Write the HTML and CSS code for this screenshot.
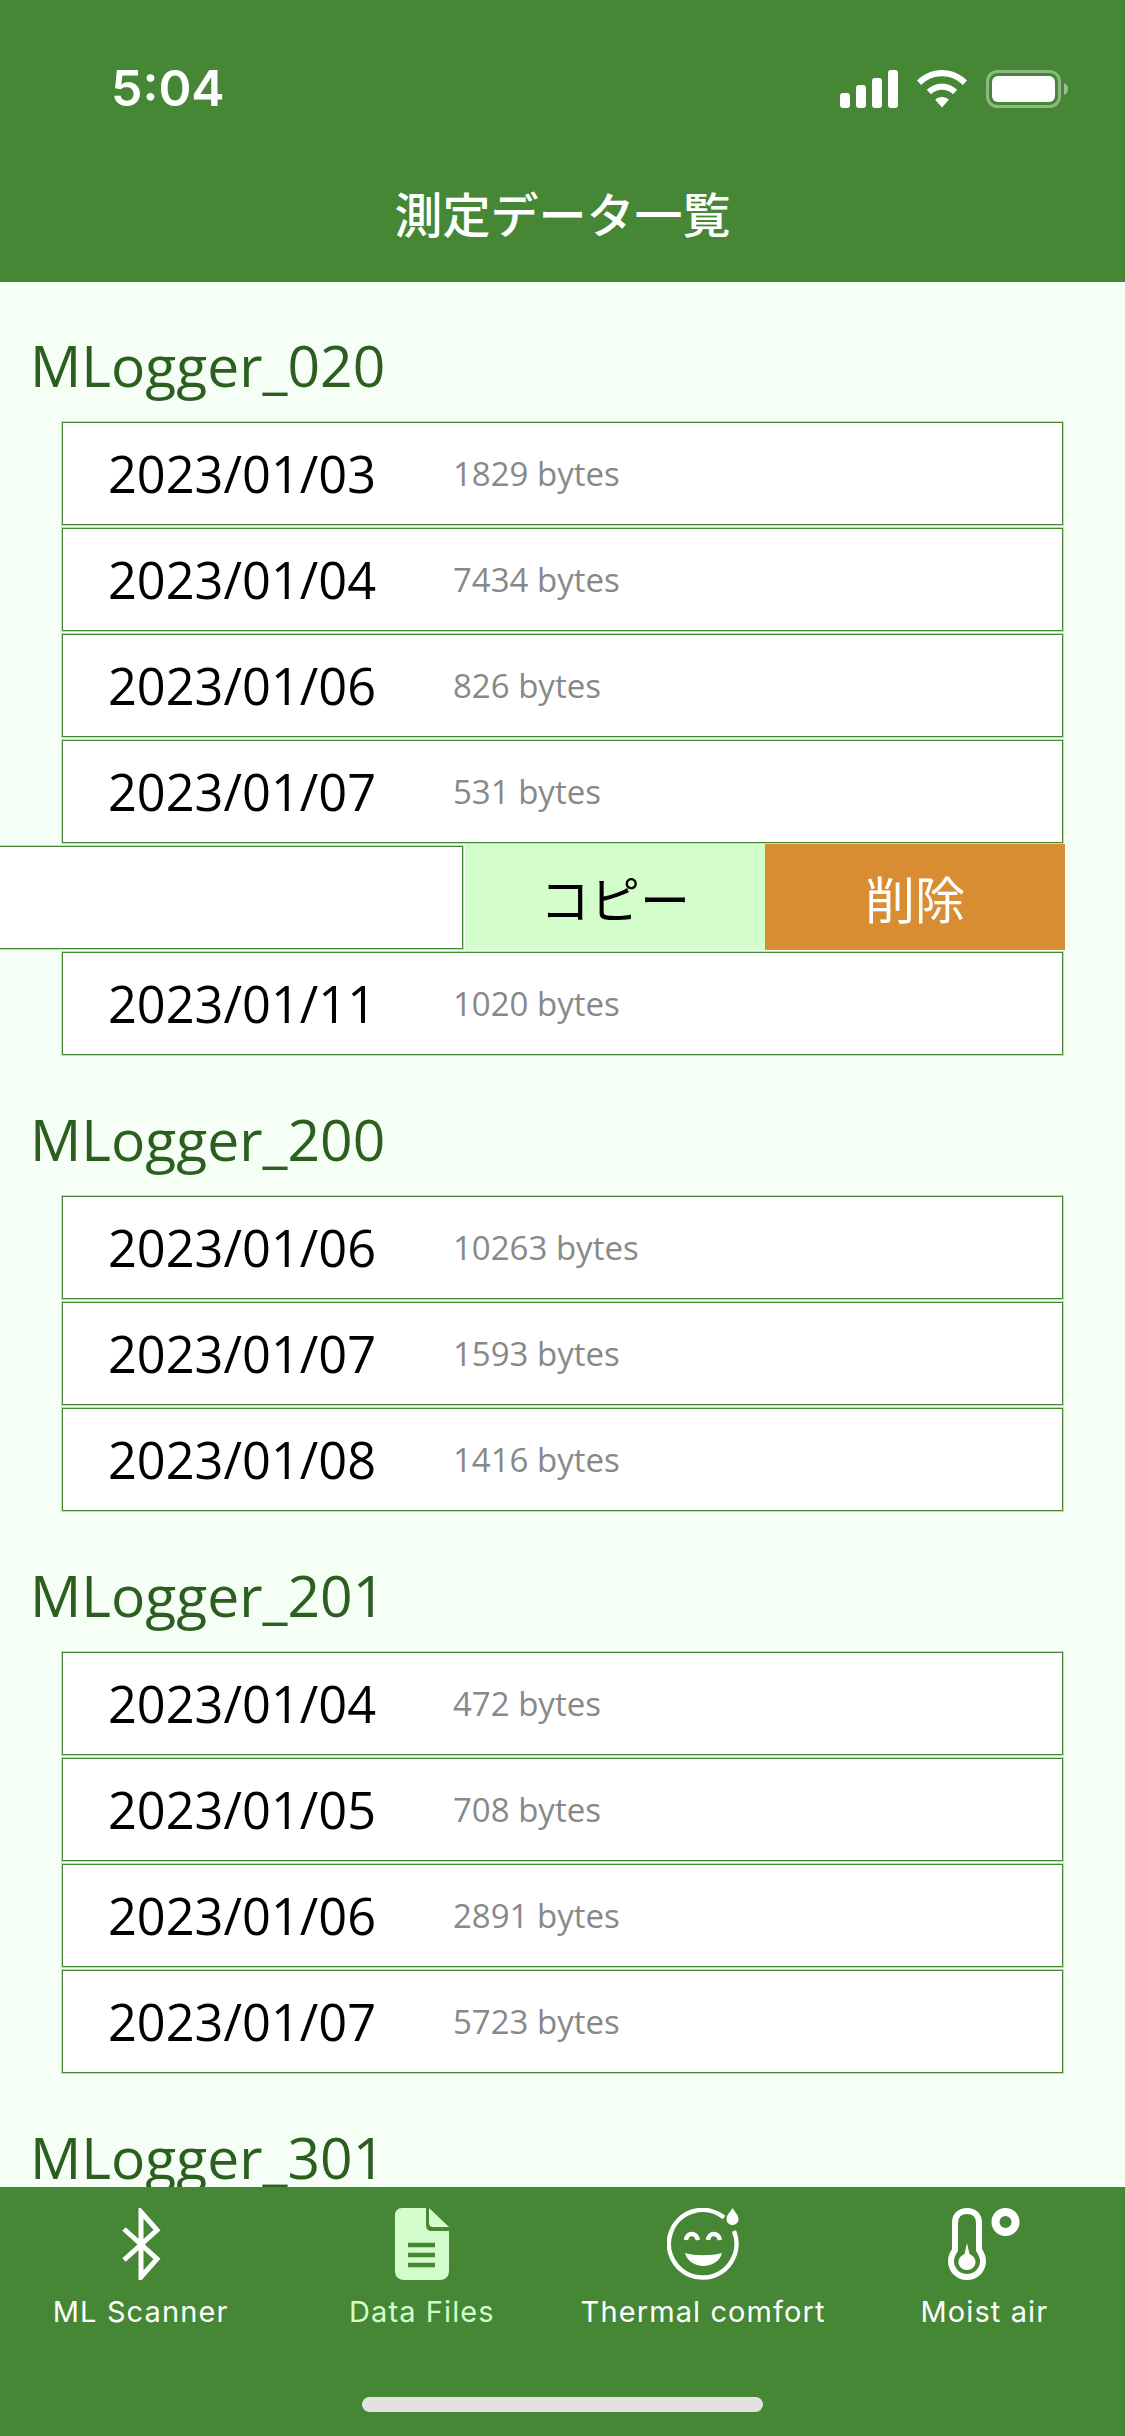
FILE: index.html
```html
<!DOCTYPE html>
<html lang="ja">
<head>
<meta charset="utf-8">
<title>測定データ一覧</title>
<link rel="stylesheet" href="styles.css">
</head>
<body>
<div class="app">
  <header class="header">
    <div class="status">
      <span class="time">5:04</span>
      <div class="status-icons">
        <svg class="ic-signal" width="58" height="38" viewBox="0 0 58 38"><rect x="0" y="23" width="10" height="15" rx="3"/><rect x="16" y="15" width="10" height="23" rx="3"/><rect x="32" y="8" width="10" height="30" rx="3"/><rect x="48" y="0" width="10" height="38" rx="3"/></svg>
        <svg class="ic-wifi" width="50" height="38" viewBox="0 0 50 38"><path d="M25 0C34.500 0 43 3.700 50 10.500L45.800 15C40.200 9.500 33 6.300 25 6.300S9.800 9.500 4.200 15L0 10.500C7 3.700 15.500 0 25 0Z"/><path d="M25 13.500C30.800 13.500 36 15.800 40.200 19.800L36 24.300C33 21.500 29.200 19.800 25 19.800S17 21.500 14 24.300L9.800 19.800C14 15.800 19.200 13.500 25 13.500Z"/><path d="M25 27C27.600 27 30 28 31.800 29.700L25 37.500L18.200 29.700C20 28 22.400 27 25 27Z"/></svg>
        <svg class="ic-battery" width="83" height="38" viewBox="0 0 83 38"><rect x="1.500" y="1.500" width="72" height="35" rx="10" class="bat-outline"/><rect x="6" y="6" width="63" height="26" rx="6" class="bat-fill"/><path d="M78 13C81 14 82 16.500 82 19S81 24 78 25Z" class="bat-nub"/></svg>
      </div>
    </div>
    <h1 class="title">測定データ一覧</h1>
  </header>

  <main class="content">
    <section class="group">
      <h2 class="group-name">MLogger_020</h2>
      <div class="row"><span class="date">2023/01/03</span><span class="size">1829 bytes</span></div>
      <div class="row"><span class="date">2023/01/04</span><span class="size">7434 bytes</span></div>
      <div class="row"><span class="date">2023/01/06</span><span class="size">826 bytes</span></div>
      <div class="row"><span class="date">2023/01/07</span><span class="size">531 bytes</span></div>
      <div class="swipe">
        <div class="swipe-row"></div>
        <div class="action action-copy">コピー</div>
        <div class="action action-delete">削除</div>
      </div>
      <div class="row"><span class="date">2023/01/11</span><span class="size">1020 bytes</span></div>
    </section>
    <section class="group">
      <h2 class="group-name">MLogger_200</h2>
      <div class="row"><span class="date">2023/01/06</span><span class="size">10263 bytes</span></div>
      <div class="row"><span class="date">2023/01/07</span><span class="size">1593 bytes</span></div>
      <div class="row"><span class="date">2023/01/08</span><span class="size">1416 bytes</span></div>
    </section>
    <section class="group">
      <h2 class="group-name">MLogger_201</h2>
      <div class="row"><span class="date">2023/01/04</span><span class="size">472 bytes</span></div>
      <div class="row"><span class="date">2023/01/05</span><span class="size">708 bytes</span></div>
      <div class="row"><span class="date">2023/01/06</span><span class="size">2891 bytes</span></div>
      <div class="row"><span class="date">2023/01/07</span><span class="size">5723 bytes</span></div>
    </section>
    <section class="group">
      <h2 class="group-name">MLogger_301</h2>
    </section>
  </main>

  <nav class="tabbar">
    <div class="tabs">
      <div class="tab">
        <svg class="tab-icon" width="72" height="72" viewBox="0 0 72 72"><path d="M19 21L52 51L36 69V4L52 22L19 52" class="stroke-white" stroke-width="5"/></svg>
        <span>ML Scanner</span>
      </div>
      <div class="tab tab-active">
        <svg class="tab-icon" width="72" height="72" viewBox="0 0 72 72"><path d="M16 0H40V17C40 20.500 42 23 45 23H63V63C63 68.500 59.500 72 54 72H18C12.500 72 9 68.500 9 63V7C9 3 12 0 16 0Z" class="fill-mint"/><path d="M43 0L63 19H47C45 19 43 18 43 15Z" class="fill-mint"/><path d="M22 37H49M22 47H49M22 57H49" class="stroke-green" stroke-width="4.500"/></svg>
        <span>Data Files</span>
      </div>
      <div class="tab">
        <svg class="tab-icon" width="72" height="72" viewBox="0 0 72 72"><path d="M57 9.500A33.800 33.800 0 1 0 67 23" class="stroke-white" stroke-width="4.500"/><path d="M65.500 0C67 3.500 71.500 6.500 71.500 11C71.500 14.500 68.800 17 65.500 17C62.200 17 59.500 14.500 59.500 11C59.500 6.500 64 3.500 65.500 0Z" class="fill-white"/><path d="M19 32C20 24 29 24 31 32M41 32C42 24 51 24 53 32" class="stroke-white" stroke-width="4.500"/><path d="M18 45C28 48 44 48 55 45C53 53 45 58 36.500 58C28 58 20 53 18 45Z" class="fill-white"/></svg>
        <span>Thermal comfort</span>
      </div>
      <div class="tab">
        <svg class="tab-icon" width="72" height="72" viewBox="0 0 72 72"><path d="M7 42V15C7 7 12 3 19 3C26 3 31 7 31 15V42C33 45 35 49 35 53C35 62 28 69 19 69C10 69 3 62 3 53C3 49 5 45 7 42Z" class="stroke-white" stroke-width="6"/><path d="M19 35L21.500 46C25 47.500 27.500 50.500 27.500 54C27.500 58.500 23.500 62 19 62C14.500 62 10.500 58.500 10.500 54C10.500 50.500 13 47.500 16.500 46Z" class="fill-white"/><circle cx="57.500" cy="14" r="10" class="stroke-white" stroke-width="8"/></svg>
        <span>Moist air</span>
      </div>
    </div>
    <div class="home-indicator"></div>
  </nav>
</div>
</body>
</html>
```
FILE: styles.css
```css
* { box-sizing: border-box; }
html, body { margin: 0; padding: 0; }
body { width: 1125px; height: 2436px; overflow: hidden; font-family: "Open Sans", "Noto Sans CJK JP", sans-serif; }

.app { display: flex; flex-direction: column; width: 1125px; height: 2436px; background: #f6fff6; }

.header { flex: none; height: 282px; background: #458735; color: #fff; }
.status { display: flex; justify-content: space-between; align-items: flex-start; padding: 70px 56px 0 111px; height: 183px; }
.time { font-family: Inter, "Liberation Sans", sans-serif; font-weight: 600; font-size: 50px; line-height: 37px; }
.status-icons { display: flex; align-items: flex-start; gap: 19px; }
.status-icons svg { display: block; fill: #fff; }
.bat-outline { fill: none; stroke: #fff; stroke-opacity: .4; stroke-width: 3; }
.bat-fill { fill: #fff; }
.bat-nub { fill: #fff; fill-opacity: .45; }
.title { margin: 0; text-align: center; font-family: "Noto Sans CJK JP", sans-serif; font-weight: 500; font-size: 48px; line-height: 58px; }

.content { flex: 1; min-height: 0; overflow: hidden; }
.group { margin-top: 42px; }
.group:first-child { margin-top: 41px; }
.group-name { margin: 0 0 15px 30px; font-weight: 400; font-size: 57px; line-height: 84px; color: #2c5e20; }

.row { display: flex; align-items: center; height: 103px; margin: 0 62px 3px; padding-left: 45px; background: #fff; border: 1px solid #458735; box-shadow: 0 0 0 1px rgba(69, 135, 53, .3); }
.date { width: 345px; font-size: 50.500px; color: #000; }
.size { font-size: 33px; color: #888; }

.swipe { display: flex; height: 106px; margin: -2px 60px 2px 0; }
.swipe-row { flex: 1; height: 103px; margin: 2px 2px 0 -4px; background: #fff; border: 1px solid #458735; box-shadow: 0 0 0 1px rgba(69, 135, 53, .3); }
.action { display: flex; align-items: center; justify-content: center; width: 300px; font-family: "Noto Sans CJK JP", sans-serif; font-size: 50px; }
.action-copy { background: #d3fdcb; color: #000; }
.action-delete { background: #d98d32; color: #fff; }

.tabbar { flex: none; position: relative; height: 249px; background: #458735; color: #fff; }
.tabs { display: grid; grid-template-columns: repeat(4, 1fr); padding-top: 21px; }
.tab { display: flex; flex-direction: column; align-items: center; gap: 13px; font-family: Inter, "Liberation Sans", sans-serif; font-size: 29px; letter-spacing: 1.100px; line-height: 38px; }
.tab-active { color: #d3fdcb; }
.tab-icon { display: block; }
.stroke-white { fill: none; stroke: #fff; }
.fill-white { fill: #fff; }
.fill-mint { fill: #d3fdcb; }
.stroke-green { fill: none; stroke: #458735; }
.home-indicator { position: absolute; left: 362px; bottom: 24px; width: 401px; height: 15px; border-radius: 8px; background: #e2e2e2; }
```
